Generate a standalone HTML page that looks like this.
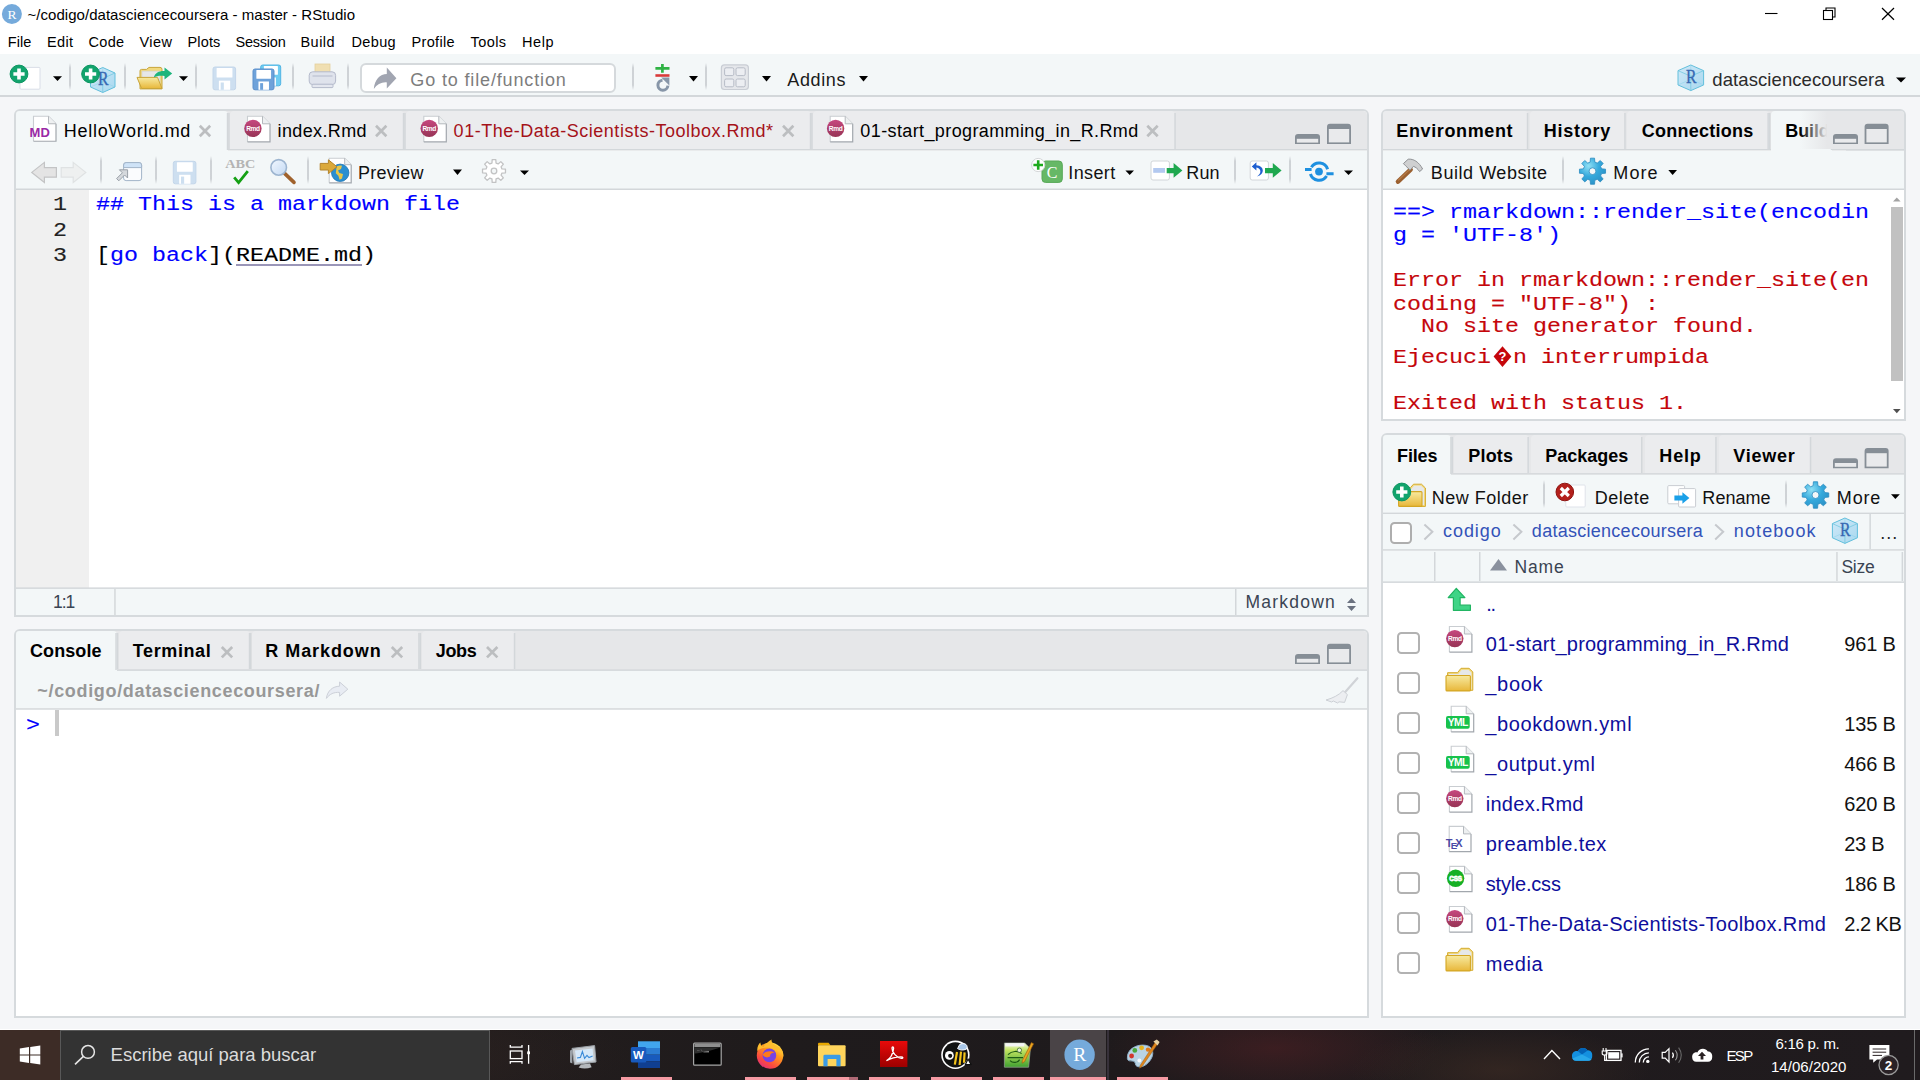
<!DOCTYPE html>
<html><head><meta charset="utf-8"><title>RStudio</title>
<style>
html,body{margin:0;padding:0}
body{width:1920px;height:1080px;overflow:hidden;position:relative;background:#f5f6f8;font-family:'Liberation Sans', sans-serif;}
div,svg,.t{position:absolute;box-sizing:border-box}
.t{white-space:pre;display:block}
</style></head><body>
<div style="left:0px;top:0px;width:1920px;height:54px;background:#fff;"></div>
<div style="left:0px;top:54px;width:1920px;height:41px;background:#f3f7f8;"></div>
<div style="left:0px;top:95px;width:1920px;height:2px;background:#d3d7da;"></div>
<span class="t" style="left:27.48px;top:6.75px;font-size:15px;line-height:15px;color:#000;letter-spacing:0.042px;">~/codigo/datasciencecoursera - master - RStudio</span>
<span class="t" style="left:7.74px;top:35.17px;font-size:14.5px;line-height:14.5px;color:#000;letter-spacing:0.035px;">File</span>
<span class="t" style="left:46.99px;top:35.17px;font-size:14.5px;line-height:14.5px;color:#000;letter-spacing:0.379px;">Edit</span>
<span class="t" style="left:88.49px;top:35.17px;font-size:14.5px;line-height:14.5px;color:#000;letter-spacing:0.336px;">Code</span>
<span class="t" style="left:139.49px;top:35.17px;font-size:14.5px;line-height:14.5px;color:#000;letter-spacing:0.461px;">View</span>
<span class="t" style="left:187.49px;top:35.17px;font-size:14.5px;line-height:14.5px;color:#000;letter-spacing:0.153px;">Plots</span>
<span class="t" style="left:235.49px;top:35.17px;font-size:14.5px;line-height:14.5px;color:#000;letter-spacing:-0.226px;">Session</span>
<span class="t" style="left:300.49px;top:35.17px;font-size:14.5px;line-height:14.5px;color:#000;letter-spacing:0.453px;">Build</span>
<span class="t" style="left:351.49px;top:35.17px;font-size:14.5px;line-height:14.5px;color:#000;letter-spacing:0.356px;">Debug</span>
<span class="t" style="left:411.49px;top:35.17px;font-size:14.5px;line-height:14.5px;color:#000;letter-spacing:0.344px;">Profile</span>
<span class="t" style="left:470.49px;top:35.17px;font-size:14.5px;line-height:14.5px;color:#000;letter-spacing:0.431px;">Tools</span>
<span class="t" style="left:521.99px;top:35.17px;font-size:14.5px;line-height:14.5px;color:#000;letter-spacing:0.609px;">Help</span>
<div style="left:360.4px;top:62.6px;width:256px;height:30.8px;background:#fff;border:2px solid #d5d9dc;border-radius:6px;"></div>
<span class="t" style="left:410.37px;top:70.70px;font-size:18px;line-height:18px;color:#7d7d7d;letter-spacing:0.851px;">Go to file/function</span>
<span class="t" style="left:787.37px;top:70.70px;font-size:18px;line-height:18px;color:#1a1a1a;letter-spacing:0.619px;">Addins</span>
<span class="t" style="left:1712.35px;top:71.28px;font-size:18.5px;line-height:18.5px;color:#2b2b2b;letter-spacing:0.083px;">datasciencecoursera</span>
<div style="left:69px;top:63px;width:2px;height:27px;background:linear-gradient(180deg,rgba(200,204,208,0),rgba(200,204,208,.85) 18%,rgba(200,204,208,.85) 82%,rgba(200,204,208,0));"></div>
<div style="left:124px;top:63px;width:2px;height:27px;background:linear-gradient(180deg,rgba(200,204,208,0),rgba(200,204,208,.85) 18%,rgba(200,204,208,.85) 82%,rgba(200,204,208,0));"></div>
<div style="left:195px;top:63px;width:2px;height:27px;background:linear-gradient(180deg,rgba(200,204,208,0),rgba(200,204,208,.85) 18%,rgba(200,204,208,.85) 82%,rgba(200,204,208,0));"></div>
<div style="left:292px;top:63px;width:2px;height:27px;background:linear-gradient(180deg,rgba(200,204,208,0),rgba(200,204,208,.85) 18%,rgba(200,204,208,.85) 82%,rgba(200,204,208,0));"></div>
<div style="left:347px;top:63px;width:2px;height:27px;background:linear-gradient(180deg,rgba(200,204,208,0),rgba(200,204,208,.85) 18%,rgba(200,204,208,.85) 82%,rgba(200,204,208,0));"></div>
<div style="left:632px;top:63px;width:2px;height:27px;background:linear-gradient(180deg,rgba(200,204,208,0),rgba(200,204,208,.85) 18%,rgba(200,204,208,.85) 82%,rgba(200,204,208,0));"></div>
<div style="left:705px;top:63px;width:2px;height:27px;background:linear-gradient(180deg,rgba(200,204,208,0),rgba(200,204,208,.85) 18%,rgba(200,204,208,.85) 82%,rgba(200,204,208,0));"></div>
<div style="left:14px;top:109px;width:1355px;height:508px;background:#fff;border:2px solid #d6dadd;border-radius:6px 6px 0 0;"></div>
<div style="left:16px;top:111px;width:1351px;height:38.5px;background:#e6e7e9;border-radius:4px 4px 0 0;"></div>
<div style="left:16px;top:149px;width:1351px;height:1px;background:rgba(211,215,218,1.00);"></div>
<div style="left:16px;top:150px;width:1351px;height:1px;background:rgba(211,215,218,0.50);"></div>
<div style="left:16px;top:111px;width:212px;height:40px;background:#f3f7f8;border-radius:4px 4px 0 0;"></div>
<div style="left:226px;top:113px;width:1px;height:37px;background:rgba(211,215,218,0.20);"></div>
<div style="left:227px;top:113px;width:1px;height:37px;background:rgba(211,215,218,1.00);"></div>
<div style="left:228px;top:113px;width:1px;height:37px;background:rgba(211,215,218,0.30);"></div>
<div style="left:229.8px;top:111px;width:174.2px;height:38px;background:#ebecee;border-radius:4px 4px 0 0;"></div>
<div style="left:402px;top:113px;width:1px;height:36px;background:rgba(211,215,218,0.20);"></div>
<div style="left:403px;top:113px;width:1px;height:36px;background:rgba(211,215,218,1.00);"></div>
<div style="left:404px;top:113px;width:1px;height:36px;background:rgba(211,215,218,0.30);"></div>
<div style="left:405.6px;top:111px;width:405.4px;height:38px;background:#ebecee;border-radius:4px 4px 0 0;"></div>
<div style="left:809px;top:113px;width:1px;height:36px;background:rgba(211,215,218,0.20);"></div>
<div style="left:810px;top:113px;width:1px;height:36px;background:rgba(211,215,218,1.00);"></div>
<div style="left:811px;top:113px;width:1px;height:36px;background:rgba(211,215,218,0.30);"></div>
<div style="left:812.6px;top:111px;width:362.9px;height:38px;background:#ebecee;border-radius:4px 4px 0 0;"></div>
<div style="left:1174px;top:113px;width:1px;height:36px;background:rgba(211,215,218,0.70);"></div>
<div style="left:1175px;top:113px;width:1px;height:36px;background:rgba(211,215,218,0.80);"></div>
<div style="left:228px;top:113px;width:1px;height:36px;background:rgba(211,215,218,0.80);"></div>
<div style="left:229px;top:113px;width:1px;height:36px;background:rgba(211,215,218,0.70);"></div>
<div style="left:404px;top:113px;width:1px;height:36px;background:rgba(211,215,218,0.80);"></div>
<div style="left:405px;top:113px;width:1px;height:36px;background:rgba(211,215,218,0.70);"></div>
<div style="left:811px;top:113px;width:1px;height:36px;background:rgba(211,215,218,0.80);"></div>
<div style="left:812px;top:113px;width:1px;height:36px;background:rgba(211,215,218,0.70);"></div>
<span class="t" style="left:63.87px;top:121.70px;font-size:18px;line-height:18px;color:#000;letter-spacing:0.735px;">HelloWorld.md</span>
<span class="t" style="left:277.62px;top:121.70px;font-size:18px;line-height:18px;color:#000;letter-spacing:0.357px;">index.Rmd</span>
<span class="t" style="left:453.62px;top:121.70px;font-size:18px;line-height:18px;color:#a51219;letter-spacing:0.511px;">01-The-Data-Scientists-Toolbox.Rmd*</span>
<span class="t" style="left:860.37px;top:121.70px;font-size:18px;line-height:18px;color:#000;letter-spacing:0.385px;">01-start_programming_in_R.Rmd</span>
<div style="left:16px;top:150.6px;width:1351px;height:38px;background:#f3f7f8;"></div>
<div style="left:16px;top:188px;width:1351px;height:1px;background:rgba(211,215,218,0.50);"></div>
<div style="left:16px;top:189px;width:1351px;height:1px;background:rgba(211,215,218,1.00);"></div>
<div style="left:99.5px;top:156px;width:2px;height:28px;background:linear-gradient(180deg,rgba(200,204,208,0),rgba(200,204,208,.85) 18%,rgba(200,204,208,.85) 82%,rgba(200,204,208,0));"></div>
<div style="left:154.5px;top:156px;width:2px;height:28px;background:linear-gradient(180deg,rgba(200,204,208,0),rgba(200,204,208,.85) 18%,rgba(200,204,208,.85) 82%,rgba(200,204,208,0));"></div>
<div style="left:210px;top:156px;width:2px;height:28px;background:linear-gradient(180deg,rgba(200,204,208,0),rgba(200,204,208,.85) 18%,rgba(200,204,208,.85) 82%,rgba(200,204,208,0));"></div>
<div style="left:306.5px;top:156px;width:2px;height:28px;background:linear-gradient(180deg,rgba(200,204,208,0),rgba(200,204,208,.85) 18%,rgba(200,204,208,.85) 82%,rgba(200,204,208,0));"></div>
<div style="left:1234px;top:156px;width:2px;height:28px;background:linear-gradient(180deg,rgba(200,204,208,0),rgba(200,204,208,.85) 18%,rgba(200,204,208,.85) 82%,rgba(200,204,208,0));"></div>
<div style="left:1289px;top:156px;width:2px;height:28px;background:linear-gradient(180deg,rgba(200,204,208,0),rgba(200,204,208,.85) 18%,rgba(200,204,208,.85) 82%,rgba(200,204,208,0));"></div>
<span class="t" style="left:358.12px;top:163.70px;font-size:18px;line-height:18px;color:#111;letter-spacing:0.247px;">Preview</span>
<span class="t" style="left:1068.37px;top:163.70px;font-size:18px;line-height:18px;color:#111;letter-spacing:0.371px;">Insert</span>
<span class="t" style="left:1186.37px;top:163.70px;font-size:18px;line-height:18px;color:#111;letter-spacing:0.076px;">Run</span>
<div style="left:16px;top:190px;width:73.2px;height:397.6px;background:#f0f0f0;"></div>
<span class="t" style="left:52.90px;top:194.90px;font-size:20px;line-height:20px;color:#222;font-family:'Liberation Mono', monospace;-webkit-text-stroke:0.12px;transform:scaleX(1.1651);transform-origin:0 0;">1</span>
<span class="t" style="left:52.90px;top:220.70px;font-size:20px;line-height:20px;color:#222;font-family:'Liberation Mono', monospace;-webkit-text-stroke:0.12px;transform:scaleX(1.1651);transform-origin:0 0;">2</span>
<span class="t" style="left:52.90px;top:246.40px;font-size:20px;line-height:20px;color:#222;font-family:'Liberation Mono', monospace;-webkit-text-stroke:0.12px;transform:scaleX(1.1651);transform-origin:0 0;">3</span>
<span class="t" style="left:96.40px;top:194.90px;font-size:20px;line-height:20px;color:#0000ff;font-family:'Liberation Mono', monospace;-webkit-text-stroke:0.12px;transform:scaleX(1.1664);transform-origin:0 0;">## This is a markdown file</span>
<span class="t" style="left:96.40px;top:246.40px;font-size:20px;line-height:20px;color:#000;font-family:'Liberation Mono', monospace;-webkit-text-stroke:0.12px;transform:scaleX(1.1651);transform-origin:0 0;">[</span>
<span class="t" style="left:110.40px;top:246.40px;font-size:20px;line-height:20px;color:#0000ff;font-family:'Liberation Mono', monospace;-webkit-text-stroke:0.12px;transform:scaleX(1.1664);transform-origin:0 0;">go back</span>
<span class="t" style="left:208.40px;top:246.40px;font-size:20px;line-height:20px;color:#000;font-family:'Liberation Mono', monospace;-webkit-text-stroke:0.12px;transform:scaleX(1.1659);transform-origin:0 0;">](</span>
<span class="t" style="left:236.40px;top:246.40px;font-size:20px;line-height:20px;color:#000;font-family:'Liberation Mono', monospace;-webkit-text-stroke:0.12px;transform:scaleX(1.1663);transform-origin:0 0;text-decoration:underline;text-decoration-color:#9a96b8;text-decoration-thickness:1.5px;text-underline-offset:3px;">README.md</span>
<span class="t" style="left:362.40px;top:246.40px;font-size:20px;line-height:20px;color:#000;font-family:'Liberation Mono', monospace;-webkit-text-stroke:0.12px;transform:scaleX(1.1651);transform-origin:0 0;">)</span>
<div style="left:16px;top:587px;width:1351px;height:1px;background:rgba(211,215,218,0.60);"></div>
<div style="left:16px;top:588px;width:1351px;height:1px;background:rgba(211,215,218,0.90);"></div>
<div style="left:16px;top:589px;width:1351px;height:26.2px;background:#f3f7f8;"></div>
<div style="left:114px;top:589px;width:1px;height:26px;background:rgba(211,215,218,0.80);"></div>
<div style="left:115px;top:589px;width:1px;height:26px;background:rgba(211,215,218,0.70);"></div>
<div style="left:1235px;top:589px;width:1px;height:26px;background:rgba(211,215,218,1.00);"></div>
<div style="left:1236px;top:589px;width:1px;height:26px;background:rgba(211,215,218,0.50);"></div>
<span class="t" style="left:52.89px;top:593.62px;font-size:17.5px;line-height:17.5px;color:#3a4453;letter-spacing:-0.951px;">1:1</span>
<span class="t" style="left:1245.39px;top:593.62px;font-size:17.5px;line-height:17.5px;color:#3a4453;letter-spacing:1.236px;">Markdown</span>
<div style="left:14px;top:629px;width:1355px;height:389px;background:#fff;border:2px solid #d6dadd;border-radius:6px 6px 0 0;"></div>
<div style="left:16px;top:631px;width:1351px;height:38.5px;background:#e6e7e9;border-radius:4px 4px 0 0;"></div>
<div style="left:16px;top:669px;width:1351px;height:1px;background:rgba(211,215,218,0.60);"></div>
<div style="left:16px;top:670px;width:1351px;height:1px;background:rgba(211,215,218,0.90);"></div>
<div style="left:16px;top:631px;width:100.5px;height:40.39999999999998px;background:#f3f7f8;border-radius:4px 4px 0 0;"></div>
<div style="left:115px;top:633px;width:1px;height:37px;background:rgba(211,215,218,0.70);"></div>
<div style="left:116px;top:633px;width:1px;height:37px;background:rgba(211,215,218,0.80);"></div>
<div style="left:118.6px;top:631px;width:131.4px;height:38.39999999999998px;background:#ebecee;border-radius:4px 4px 0 0;"></div>
<div style="left:248px;top:633px;width:1px;height:36px;background:rgba(211,215,218,0.20);"></div>
<div style="left:249px;top:633px;width:1px;height:36px;background:rgba(211,215,218,1.00);"></div>
<div style="left:250px;top:633px;width:1px;height:36px;background:rgba(211,215,218,0.30);"></div>
<div style="left:251.5px;top:631px;width:167.89999999999998px;height:38.39999999999998px;background:#ebecee;border-radius:4px 4px 0 0;"></div>
<div style="left:418px;top:633px;width:1px;height:36px;background:rgba(211,215,218,0.80);"></div>
<div style="left:419px;top:633px;width:1px;height:36px;background:rgba(211,215,218,0.70);"></div>
<div style="left:421.6px;top:631px;width:93.39999999999998px;height:38.39999999999998px;background:#ebecee;border-radius:4px 4px 0 0;"></div>
<div style="left:513px;top:633px;width:1px;height:36px;background:rgba(211,215,218,0.20);"></div>
<div style="left:514px;top:633px;width:1px;height:36px;background:rgba(211,215,218,1.00);"></div>
<div style="left:515px;top:633px;width:1px;height:36px;background:rgba(211,215,218,0.30);"></div>
<div style="left:116px;top:633px;width:1px;height:36px;background:rgba(211,215,218,0.20);"></div>
<div style="left:117px;top:633px;width:1px;height:36px;background:rgba(211,215,218,1.00);"></div>
<div style="left:118px;top:633px;width:1px;height:36px;background:rgba(211,215,218,0.30);"></div>
<div style="left:250px;top:633px;width:1px;height:36px;background:rgba(211,215,218,1.00);"></div>
<div style="left:251px;top:633px;width:1px;height:36px;background:rgba(211,215,218,0.50);"></div>
<div style="left:419px;top:633px;width:1px;height:36px;background:rgba(211,215,218,0.40);"></div>
<div style="left:420px;top:633px;width:1px;height:36px;background:rgba(211,215,218,1.00);"></div>
<div style="left:421px;top:633px;width:1px;height:36px;background:rgba(211,215,218,0.10);"></div>
<span class="t" style="left:29.97px;top:642.20px;font-size:18px;line-height:18px;color:#000;letter-spacing:0.092px;font-weight:700;">Console</span>
<span class="t" style="left:132.87px;top:642.20px;font-size:18px;line-height:18px;color:#000;letter-spacing:0.584px;font-weight:700;">Terminal</span>
<span class="t" style="left:265.37px;top:642.20px;font-size:18px;line-height:18px;color:#000;letter-spacing:0.924px;font-weight:700;">R Markdown</span>
<span class="t" style="left:435.77px;top:642.20px;font-size:18px;line-height:18px;color:#000;letter-spacing:-0.339px;font-weight:700;">Jobs</span>
<div style="left:16px;top:671px;width:1351px;height:37.4px;background:#f3f7f8;"></div>
<div style="left:16px;top:708px;width:1351px;height:1px;background:rgba(211,215,218,0.80);"></div>
<div style="left:16px;top:709px;width:1351px;height:1px;background:rgba(211,215,218,0.70);"></div>
<span class="t" style="left:37.37px;top:682.40px;font-size:18px;line-height:18px;color:#979797;letter-spacing:0.660px;font-weight:700;">~/codigo/datasciencecoursera/</span>
<span class="t" style="left:25.50px;top:715.90px;font-size:20px;line-height:20px;color:#0000ff;font-family:'Liberation Mono', monospace;-webkit-text-stroke:0.12px;transform:scaleX(1.1651);transform-origin:0 0;">&gt;</span>
<div style="left:55px;top:709.6px;width:4px;height:26.4px;background:#c9c9c9;"></div>
<div style="left:1381px;top:109px;width:525px;height:312px;background:#fff;border:2px solid #d6dadd;border-radius:6px 6px 0 0;"></div>
<div style="left:1383px;top:111px;width:1521.4px;height:38.5px;background:#e6e7e9;border-radius:4px 4px 0 0;width:521.4px;"></div>
<div style="left:1383px;top:149px;width:521px;height:1px;background:rgba(211,215,218,1.00);"></div>
<div style="left:1383px;top:150px;width:521px;height:1px;background:rgba(211,215,218,0.50);"></div>
<div style="left:1383px;top:111px;width:145px;height:38px;background:#ebecee;border-radius:4px 4px 0 0;"></div>
<div style="left:1526px;top:113px;width:1px;height:36px;background:rgba(211,215,218,0.20);"></div>
<div style="left:1527px;top:113px;width:1px;height:36px;background:rgba(211,215,218,1.00);"></div>
<div style="left:1528px;top:113px;width:1px;height:36px;background:rgba(211,215,218,0.30);"></div>
<div style="left:1530px;top:111px;width:95.40000000000009px;height:38px;background:#ebecee;border-radius:4px 4px 0 0;"></div>
<div style="left:1624px;top:113px;width:1px;height:36px;background:rgba(211,215,218,0.80);"></div>
<div style="left:1625px;top:113px;width:1px;height:36px;background:rgba(211,215,218,0.70);"></div>
<div style="left:1627.4px;top:111px;width:141.19999999999982px;height:38px;background:#ebecee;border-radius:4px 4px 0 0;"></div>
<div style="left:1767px;top:113px;width:1px;height:36px;background:rgba(211,215,218,0.60);"></div>
<div style="left:1768px;top:113px;width:1px;height:36px;background:rgba(211,215,218,0.90);"></div>
<div style="left:1771px;top:111px;width:61px;height:40px;background:#f3f7f8;border-radius:4px 4px 0 0;"></div>
<div style="left:1830px;top:113px;width:1px;height:37px;background:rgba(211,215,218,0.20);"></div>
<div style="left:1831px;top:113px;width:1px;height:37px;background:rgba(211,215,218,1.00);"></div>
<div style="left:1832px;top:113px;width:1px;height:37px;background:rgba(211,215,218,0.30);"></div>
<div style="left:1769px;top:113px;width:1px;height:36px;background:rgba(211,215,218,1.00);"></div>
<div style="left:1770px;top:113px;width:1px;height:36px;background:rgba(211,215,218,0.50);"></div>
<span class="t" style="left:1396.37px;top:122.20px;font-size:18px;line-height:18px;color:#000;letter-spacing:0.613px;font-weight:700;">Environment</span>
<span class="t" style="left:1543.87px;top:122.20px;font-size:18px;line-height:18px;color:#000;letter-spacing:0.749px;font-weight:700;">History</span>
<span class="t" style="left:1641.87px;top:122.20px;font-size:18px;line-height:18px;color:#000;letter-spacing:0.249px;font-weight:700;">Connections</span>
<span class="t" style="left:1785.37px;top:122.20px;font-size:18px;line-height:18px;color:#000;letter-spacing:-0.148px;font-weight:700;">Build</span>
<div style="left:1800px;top:111px;width:32px;height:38.4px;background:linear-gradient(90deg,rgba(230,231,233,0) 0,rgba(230,231,233,1) 85%);"></div>
<div style="left:1830px;top:111px;width:74.4px;height:38.4px;background:#e6e7e9;border-radius:0 4px 0 0;"></div>
<div style="left:1846px;top:149px;width:58px;height:1px;background:rgba(211,215,218,1.00);"></div>
<div style="left:1846px;top:150px;width:58px;height:1px;background:rgba(211,215,218,0.50);"></div>
<div style="left:1383px;top:150.6px;width:521.4px;height:38px;background:#f3f7f8;"></div>
<div style="left:1383px;top:188px;width:521px;height:1px;background:rgba(211,215,218,0.50);"></div>
<div style="left:1383px;top:189px;width:521px;height:1px;background:rgba(211,215,218,1.00);"></div>
<div style="left:1561.5px;top:156px;width:2px;height:28px;background:linear-gradient(180deg,rgba(200,204,208,0),rgba(200,204,208,.85) 18%,rgba(200,204,208,.85) 82%,rgba(200,204,208,0));"></div>
<span class="t" style="left:1430.87px;top:163.70px;font-size:18px;line-height:18px;color:#111;letter-spacing:0.540px;">Build Website</span>
<span class="t" style="left:1613.37px;top:163.70px;font-size:18px;line-height:18px;color:#111;letter-spacing:1.061px;">More</span>
<span class="t" style="left:1393.40px;top:202.50px;font-size:20px;line-height:20px;color:#0000ff;font-family:'Liberation Mono', monospace;-webkit-text-stroke:0.12px;transform:scaleX(1.1664);transform-origin:0 0;">==&gt; rmarkdown::render_site(encodin</span>
<span class="t" style="left:1393.40px;top:225.50px;font-size:20px;line-height:20px;color:#0000ff;font-family:'Liberation Mono', monospace;-webkit-text-stroke:0.12px;transform:scaleX(1.1664);transform-origin:0 0;">g = 'UTF-8')</span>
<span class="t" style="left:1393.40px;top:271.30px;font-size:20px;line-height:20px;color:#c5060b;font-family:'Liberation Mono', monospace;-webkit-text-stroke:0.12px;transform:scaleX(1.1664);transform-origin:0 0;">Error in rmarkdown::render_site(en</span>
<span class="t" style="left:1393.40px;top:294.50px;font-size:20px;line-height:20px;color:#c5060b;font-family:'Liberation Mono', monospace;-webkit-text-stroke:0.12px;transform:scaleX(1.1664);transform-origin:0 0;">coding = "UTF-8") :</span>
<span class="t" style="left:1393.40px;top:317.30px;font-size:20px;line-height:20px;color:#c5060b;font-family:'Liberation Mono', monospace;-webkit-text-stroke:0.12px;transform:scaleX(1.1664);transform-origin:0 0;">  No site generator found.</span>
<span class="t" style="left:1393.40px;top:347.50px;font-size:20px;line-height:20px;color:#c5060b;font-family:'Liberation Mono', monospace;-webkit-text-stroke:0.12px;transform:scaleX(1.1664);transform-origin:0 0;">Ejecuci</span>
<span class="t" style="left:1393.40px;top:393.90px;font-size:20px;line-height:20px;color:#c5060b;font-family:'Liberation Mono', monospace;-webkit-text-stroke:0.12px;transform:scaleX(1.1664);transform-origin:0 0;">Exited with status 1.</span>
<span class="t" style="left:1513.20px;top:347.50px;font-size:20px;line-height:20px;color:#c5060b;font-family:'Liberation Mono', monospace;-webkit-text-stroke:0.12px;transform:scaleX(1.1664);transform-origin:0 0;">n interrumpida</span>
<div style="left:1889px;top:190px;width:15.4px;height:229px;background:#fff;"></div>
<div style="left:1890.6px;top:207px;width:12.6px;height:173.6px;background:#c1c1c1;"></div>
<div style="left:1381px;top:433px;width:525px;height:585px;background:#fff;border:2px solid #d6dadd;border-radius:6px 6px 0 0;"></div>
<div style="left:1383px;top:435.2px;width:521.4px;height:38.5px;background:#e6e7e9;border-radius:4px 4px 0 0;"></div>
<div style="left:1383px;top:473px;width:521px;height:1px;background:rgba(211,215,218,0.80);"></div>
<div style="left:1383px;top:474px;width:521px;height:1px;background:rgba(211,215,218,0.70);"></div>
<div style="left:1383px;top:435.2px;width:68.40000000000009px;height:40.0px;background:#f3f7f8;border-radius:4px 4px 0 0;"></div>
<div style="left:1450px;top:437px;width:1px;height:37px;background:rgba(211,215,218,0.80);"></div>
<div style="left:1451px;top:437px;width:1px;height:37px;background:rgba(211,215,218,0.70);"></div>
<div style="left:1453.6px;top:435.2px;width:75.0px;height:38.0px;background:#ebecee;border-radius:4px 4px 0 0;"></div>
<div style="left:1527px;top:437px;width:1px;height:36px;background:rgba(211,215,218,0.60);"></div>
<div style="left:1528px;top:437px;width:1px;height:36px;background:rgba(211,215,218,0.90);"></div>
<div style="left:1531px;top:435.2px;width:111.20000000000005px;height:38.0px;background:#ebecee;border-radius:4px 4px 0 0;"></div>
<div style="left:1641px;top:437px;width:1px;height:36px;background:rgba(211,215,218,1.00);"></div>
<div style="left:1642px;top:437px;width:1px;height:36px;background:rgba(211,215,218,0.50);"></div>
<div style="left:1645px;top:435.2px;width:71.40000000000009px;height:38.0px;background:#ebecee;border-radius:4px 4px 0 0;"></div>
<div style="left:1715px;top:437px;width:1px;height:36px;background:rgba(211,215,218,0.80);"></div>
<div style="left:1716px;top:437px;width:1px;height:36px;background:rgba(211,215,218,0.70);"></div>
<div style="left:1719px;top:435.2px;width:92px;height:38.0px;background:#ebecee;border-radius:4px 4px 0 0;"></div>
<div style="left:1809px;top:437px;width:1px;height:36px;background:rgba(211,215,218,0.20);"></div>
<div style="left:1810px;top:437px;width:1px;height:36px;background:rgba(211,215,218,1.00);"></div>
<div style="left:1811px;top:437px;width:1px;height:36px;background:rgba(211,215,218,0.30);"></div>
<div style="left:1451px;top:437px;width:1px;height:36px;background:rgba(211,215,218,0.40);"></div>
<div style="left:1452px;top:437px;width:1px;height:36px;background:rgba(211,215,218,1.00);"></div>
<div style="left:1453px;top:437px;width:1px;height:36px;background:rgba(211,215,218,0.10);"></div>
<span class="t" style="left:1397.12px;top:446.60px;font-size:18px;line-height:18px;color:#000;letter-spacing:-0.184px;font-weight:700;">Files</span>
<span class="t" style="left:1468.37px;top:446.60px;font-size:18px;line-height:18px;color:#000;letter-spacing:0.149px;font-weight:700;">Plots</span>
<span class="t" style="left:1545.37px;top:446.60px;font-size:18px;line-height:18px;color:#000;letter-spacing:-0.040px;font-weight:700;">Packages</span>
<span class="t" style="left:1659.37px;top:446.60px;font-size:18px;line-height:18px;color:#000;letter-spacing:0.811px;font-weight:700;">Help</span>
<span class="t" style="left:1733.37px;top:446.60px;font-size:18px;line-height:18px;color:#000;letter-spacing:0.757px;font-weight:700;">Viewer</span>
<div style="left:1383px;top:474.8px;width:521.4px;height:38px;background:#f3f7f8;"></div>
<div style="left:1383px;top:512px;width:521px;height:1px;background:rgba(211,215,218,0.40);"></div>
<div style="left:1383px;top:513px;width:521px;height:1px;background:rgba(211,215,218,1.00);"></div>
<div style="left:1383px;top:514px;width:521px;height:1px;background:rgba(211,215,218,0.10);"></div>
<div style="left:1542.5px;top:480px;width:2px;height:28px;background:linear-gradient(180deg,rgba(200,204,208,0),rgba(200,204,208,.85) 18%,rgba(200,204,208,.85) 82%,rgba(200,204,208,0));"></div>
<div style="left:1785px;top:480px;width:2px;height:28px;background:linear-gradient(180deg,rgba(200,204,208,0),rgba(200,204,208,.85) 18%,rgba(200,204,208,.85) 82%,rgba(200,204,208,0));"></div>
<span class="t" style="left:1431.87px;top:488.70px;font-size:18px;line-height:18px;color:#111;letter-spacing:0.473px;">New Folder</span>
<span class="t" style="left:1594.87px;top:488.70px;font-size:18px;line-height:18px;color:#111;letter-spacing:0.455px;">Delete</span>
<span class="t" style="left:1702.37px;top:488.70px;font-size:18px;line-height:18px;color:#111;letter-spacing:0.036px;">Rename</span>
<span class="t" style="left:1836.87px;top:488.70px;font-size:18px;line-height:18px;color:#111;letter-spacing:0.811px;">More</span>
<div style="left:1383px;top:514.2px;width:521.4px;height:35.4px;background:#f3f7f8;"></div>
<div style="left:1383px;top:549px;width:521px;height:1px;background:rgba(211,215,218,0.80);"></div>
<div style="left:1383px;top:550px;width:521px;height:1px;background:rgba(211,215,218,0.70);"></div>
<div style="left:1869px;top:514px;width:1px;height:35px;background:rgba(211,215,218,0.60);"></div>
<div style="left:1870px;top:514px;width:1px;height:35px;background:rgba(211,215,218,0.90);"></div>
<div style="left:1390px;top:522.4px;width:22.4px;height:22px;background:#fff;border:2px solid #aeaeae;border-radius:4.5px;"></div>
<span class="t" style="left:1443.12px;top:522.20px;font-size:18px;line-height:18px;color:#3353b8;letter-spacing:0.911px;">codigo</span>
<span class="t" style="left:1531.87px;top:522.20px;font-size:18px;line-height:18px;color:#3353b8;letter-spacing:0.271px;">datasciencecoursera</span>
<span class="t" style="left:1733.87px;top:522.20px;font-size:18px;line-height:18px;color:#3353b8;letter-spacing:1.085px;">notebook</span>
<span class="t" style="left:1880.37px;top:524.30px;font-size:18px;line-height:18px;color:#222;letter-spacing:0.915px;">...</span>
<div style="left:1383px;top:550.8px;width:521.4px;height:30.8px;background:#f3f7f8;"></div>
<div style="left:1383px;top:581px;width:521px;height:1px;background:rgba(211,215,218,0.60);"></div>
<div style="left:1383px;top:582px;width:521px;height:1px;background:rgba(211,215,218,0.90);"></div>
<div style="left:1434px;top:552px;width:1px;height:29px;background:rgba(211,215,218,1.00);"></div>
<div style="left:1435px;top:552px;width:1px;height:29px;background:rgba(211,215,218,0.50);"></div>
<div style="left:1479px;top:552px;width:1px;height:29px;background:rgba(211,215,218,1.00);"></div>
<div style="left:1480px;top:552px;width:1px;height:29px;background:rgba(211,215,218,0.50);"></div>
<div style="left:1836px;top:552px;width:1px;height:29px;background:rgba(211,215,218,0.80);"></div>
<div style="left:1837px;top:552px;width:1px;height:29px;background:rgba(211,215,218,0.70);"></div>
<div style="left:1901px;top:552px;width:1px;height:29px;background:rgba(211,215,218,0.40);"></div>
<div style="left:1902px;top:552px;width:1px;height:29px;background:rgba(211,215,218,1.00);"></div>
<div style="left:1903px;top:552px;width:1px;height:29px;background:rgba(211,215,218,0.10);"></div>
<span class="t" style="left:1514.39px;top:558.62px;font-size:17.5px;line-height:17.5px;color:#3a4453;letter-spacing:0.884px;">Name</span>
<span class="t" style="left:1841.39px;top:558.62px;font-size:17.5px;line-height:17.5px;color:#3a4453;letter-spacing:-0.205px;">Size</span>
<span class="t" style="left:1486.30px;top:593.60px;font-size:20px;line-height:20px;color:#0e0e9c;letter-spacing:-1.362px;">..</span>
<span class="t" style="left:1485.80px;top:633.60px;font-size:20px;line-height:20px;color:#0e0e9c;letter-spacing:0.228px;">01-start_programming_in_R.Rmd</span>
<span class="t" style="left:1844.30px;top:633.60px;font-size:20px;line-height:20px;color:#111;letter-spacing:-0.173px;">961 B</span>
<div style="left:1397.2px;top:632.4px;width:22.4px;height:22px;background:#fff;border:2px solid #b2b2b2;border-radius:4.5px;"></div>
<span class="t" style="left:1485.30px;top:673.60px;font-size:20px;line-height:20px;color:#0e0e9c;letter-spacing:0.680px;">_book</span>
<div style="left:1397.2px;top:672.4px;width:22.4px;height:22px;background:#fff;border:2px solid #b2b2b2;border-radius:4.5px;"></div>
<span class="t" style="left:1485.30px;top:713.60px;font-size:20px;line-height:20px;color:#0e0e9c;letter-spacing:0.610px;">_bookdown.yml</span>
<span class="t" style="left:1844.30px;top:713.60px;font-size:20px;line-height:20px;color:#111;letter-spacing:-0.173px;">135 B</span>
<div style="left:1397.2px;top:712.4px;width:22.4px;height:22px;background:#fff;border:2px solid #b2b2b2;border-radius:4.5px;"></div>
<span class="t" style="left:1485.30px;top:753.60px;font-size:20px;line-height:20px;color:#0e0e9c;letter-spacing:0.637px;">_output.yml</span>
<span class="t" style="left:1844.30px;top:753.60px;font-size:20px;line-height:20px;color:#111;letter-spacing:-0.173px;">466 B</span>
<div style="left:1397.2px;top:752.4px;width:22.4px;height:22px;background:#fff;border:2px solid #b2b2b2;border-radius:4.5px;"></div>
<span class="t" style="left:1485.80px;top:793.60px;font-size:20px;line-height:20px;color:#0e0e9c;letter-spacing:0.255px;">index.Rmd</span>
<span class="t" style="left:1844.30px;top:793.60px;font-size:20px;line-height:20px;color:#111;letter-spacing:-0.173px;">620 B</span>
<div style="left:1397.2px;top:792.4px;width:22.4px;height:22px;background:#fff;border:2px solid #b2b2b2;border-radius:4.5px;"></div>
<span class="t" style="left:1485.80px;top:833.60px;font-size:20px;line-height:20px;color:#0e0e9c;letter-spacing:0.440px;">preamble.tex</span>
<span class="t" style="left:1844.30px;top:833.60px;font-size:20px;line-height:20px;color:#111;letter-spacing:-0.314px;">23 B</span>
<div style="left:1397.2px;top:832.4px;width:22.4px;height:22px;background:#fff;border:2px solid #b2b2b2;border-radius:4.5px;"></div>
<span class="t" style="left:1485.80px;top:873.60px;font-size:20px;line-height:20px;color:#0e0e9c;letter-spacing:-0.199px;">style.css</span>
<span class="t" style="left:1844.30px;top:873.60px;font-size:20px;line-height:20px;color:#111;letter-spacing:-0.173px;">186 B</span>
<div style="left:1397.2px;top:872.4px;width:22.4px;height:22px;background:#fff;border:2px solid #b2b2b2;border-radius:4.5px;"></div>
<span class="t" style="left:1485.80px;top:913.60px;font-size:20px;line-height:20px;color:#0e0e9c;letter-spacing:0.367px;">01-The-Data-Scientists-Toolbox.Rmd</span>
<span class="t" style="left:1844.30px;top:913.60px;font-size:20px;line-height:20px;color:#111;letter-spacing:-0.524px;">2.2 KB</span>
<div style="left:1397.2px;top:912.4px;width:22.4px;height:22px;background:#fff;border:2px solid #b2b2b2;border-radius:4.5px;"></div>
<span class="t" style="left:1485.80px;top:953.60px;font-size:20px;line-height:20px;color:#0e0e9c;letter-spacing:0.583px;">media</span>
<div style="left:1397.2px;top:952.4px;width:22.4px;height:22px;background:#fff;border:2px solid #b2b2b2;border-radius:4.5px;"></div>
<div style="left:0px;top:1029px;width:1920px;height:1px;background:#fff;"></div>
<div style="left:0px;top:1030px;width:1920px;height:50px;background:#201b1d;background:radial-gradient(ellipse 150px 45px at 1500px 40px,rgba(66,46,36,.55),rgba(66,46,36,0) 100%),radial-gradient(ellipse 170px 50px at 1275px 18px,rgba(78,32,36,.6),rgba(78,32,36,0) 100%),radial-gradient(ellipse 300px 60px at 330px 25px,rgba(60,44,38,.35),rgba(60,44,38,0) 100%),linear-gradient(90deg,#3c2b25 0,#2b2220 5%,#231d1d 22%,#1f1b1c 40%,#1e1a1c 60%,#201b1e 100%);"></div>
<div style="left:0px;top:1030px;width:60px;height:50px;background:#3d2c26;"></div>
<div style="left:60.4px;top:1030.4px;width:429.6px;height:49.6px;background:#333333;border:1px solid #585858;border-bottom:0;"></div>
<span class="t" style="left:110.60px;top:1046.18px;font-size:18.5px;line-height:18.5px;color:#dcdcdc;letter-spacing:-0.001px;">Escribe aquí para buscar</span>
<div style="left:1050px;top:1030px;width:56.4px;height:50px;background:#4a4447;"></div>
<div style="left:1107.4px;top:1030px;width:1.4px;height:50px;background:#37313a;"></div>
<div style="left:621px;top:1077.2px;width:51px;height:2.8px;background:#f59aa3;"></div>
<div style="left:745px;top:1077.2px;width:51px;height:2.8px;background:#f59aa3;"></div>
<div style="left:807px;top:1077.2px;width:51px;height:2.8px;background:#f59aa3;"></div>
<div style="left:869px;top:1077.2px;width:51px;height:2.8px;background:#f59aa3;"></div>
<div style="left:930.6px;top:1077.2px;width:51.39999999999998px;height:2.8px;background:#f59aa3;"></div>
<div style="left:993px;top:1077.2px;width:51px;height:2.8px;background:#f59aa3;"></div>
<div style="left:1050px;top:1077.2px;width:56.40000000000009px;height:2.8px;background:#f59aa3;"></div>
<div style="left:1117px;top:1077.2px;width:51px;height:2.8px;background:#f59aa3;"></div>
<div style="left:848.5px;top:1077.2px;width:9.5px;height:2.8px;background:#b06a76;"></div>
<span class="t" style="left:1726.47px;top:1048.25px;font-size:15px;line-height:15px;color:#fff;letter-spacing:-1.655px;">ESP</span>
<span class="t" style="left:1775.47px;top:1036.25px;font-size:15px;line-height:15px;color:#fff;letter-spacing:-0.265px;">6:16 p. m.</span>
<span class="t" style="left:1770.97px;top:1059.25px;font-size:15px;line-height:15px;color:#fff;letter-spacing:0.047px;">14/06/2020</span>
<div style="left:1914.4px;top:1030px;width:1px;height:50px;background:#6a6a6a;"></div>
<svg style="left:0;top:0" width="1920" height="1080" viewBox="0 0 1920 1080"><defs>
<linearGradient id="gFold" x1="0" y1="0" x2="0" y2="1"><stop offset="0" stop-color="#f7eaa0"/><stop offset="1" stop-color="#e8b73a"/></linearGradient>
<linearGradient id="gRmd" x1="0" y1="0" x2="0" y2="1"><stop offset="0" stop-color="#c6487f"/><stop offset="1" stop-color="#973455"/></linearGradient>
<radialGradient id="gGear" cx="0.35" cy="0.3" r="0.8"><stop offset="0" stop-color="#8fe0f5"/><stop offset="0.5" stop-color="#35a9dc"/><stop offset="1" stop-color="#2a8fc4"/></radialGradient>
<linearGradient id="gCube" x1="0" y1="0" x2="1" y2="1"><stop offset="0" stop-color="#cfe9f8"/><stop offset="1" stop-color="#a9d8ef"/></linearGradient>
<linearGradient id="gPdf" x1="0" y1="0" x2="0" y2="1"><stop offset="0" stop-color="#e80a0a"/><stop offset="1" stop-color="#9c0000"/></linearGradient>
<linearGradient id="gNpp" x1="0" y1="0" x2="0" y2="1"><stop offset="0" stop-color="#f4f8e8"/><stop offset="0.3" stop-color="#c2e460"/><stop offset="1" stop-color="#3fa030"/></linearGradient>
<linearGradient id="gFx" x1="0.8" y1="0.05" x2="0.2" y2="0.95"><stop offset="0" stop-color="#ffe94a"/><stop offset="0.35" stop-color="#ff9a1e"/><stop offset="0.75" stop-color="#fb4a3e"/><stop offset="1" stop-color="#e0307a"/></linearGradient>
<linearGradient id="gLens" x1="0" y1="0" x2="1" y2="1"><stop offset="0" stop-color="#f2f8ff"/><stop offset="1" stop-color="#c3d9f3"/></linearGradient>
</defs><circle cx="11.90" cy="14.00" r="10.00" fill="#75aadb" /><text x="11.90" y="18.60" font-family="Liberation Serif" font-size="13.5" font-weight="400" fill="#fff" text-anchor="middle" >R</text><path d="M1765 13.5H1777.5" fill="none" stroke="#000" stroke-width="1.1" /><rect x="1823.50" y="10.50" width="9.00" height="9.00" fill="none" stroke="#000" stroke-width="1.1" /><path d="M1826 10.5V8H1835V17H1832.5" fill="none" stroke="#000" stroke-width="1.1" /><path d="M1882 8L1894 19.8M1894 8L1882 19.8" fill="none" stroke="#000" stroke-width="1.2" /><rect x="20.00" y="67.40" width="20.00" height="21.80" fill="#fff" stroke="#d9dee7" stroke-width="1" rx="1" /><circle cx="19.00" cy="74.00" r="8.90" fill="#12a46d" stroke="#0e9562" stroke-width="1" /><path d="M13.4 74H24.6M19 68.4V79.6" fill="none" stroke="#fff" stroke-width="3.6" /><path d="M53 76.3H62L57.5 81Z" fill="#000" /><path d="M102.75 67.5L115.0 73.0V87.0L102.75 92.5L90.5 87.0V73.0Z" fill="url(#gCube)" stroke="#62bfdc" stroke-width="1" /><path d="M90.5 73.0L102.75 78.5L115.0 73.0M102.75 78.5V92.5" fill="none" stroke="#6cc6de" stroke-width="0.9" opacity="0.8"/><path d="M90.5 87.0L102.75 81.5L115.0 87.0M102.75 67.5V81.5" fill="none" stroke="#7fcfe6" stroke-width="0.7" opacity="0.6"/><text x="103.15" y="84.75" font-family="Liberation Serif" font-size="18.0" font-weight="400" fill="#3768b2" text-anchor="middle" stroke="#3768b2" stroke-width="0.35" textLength="10.5" lengthAdjust="spacingAndGlyphs">R</text><circle cx="90.60" cy="74.00" r="8.90" fill="#12a46d" stroke="#0e9562" stroke-width="1" /><path d="M85.0 74H96.19999999999999M90.6 68.4V79.6" fill="none" stroke="#fff" stroke-width="3.6" /><path d="M140 88.9V70.9q0 -1.5 1.5 -1.5h5l2.5 -2h11q2 0 2 2V88.9Z" fill="#f1d97e" stroke="#c9a53a" stroke-width="1" /><rect x="142.00" y="71.10" width="18.00" height="13.00" fill="#e6e7e8" stroke="#cfcfcf" stroke-width="0.6" /><path d="M137 77.4H157.5L162 88.5H141.6Z" fill="url(#gFold)" stroke="#c9a53a" stroke-width="1" /><path d="M153.8 77.5C155 72.5 160 70.6 164.5 71V67.6L172.2 73.4L164.5 79.4V76C160.5 75.4 156.5 75.8 153.8 77.5Z" fill="#1db57c" /><path d="M179 76.3H188L183.5 81Z" fill="#000" /><rect x="213.00" y="67.00" width="22.60" height="22.80" fill="#cddff0" stroke="#c3d6ea" stroke-width="1" rx="2" opacity="1"/><rect x="216.62" y="68.00" width="15.82" height="9.58" fill="#fff" rx="0.5" opacity="1"/><rect x="218.88" y="80.68" width="11.30" height="9.12" fill="#fff" opacity="1"/><rect x="220.68" y="82.50" width="3.16" height="7.30" fill="#cddff0" opacity="1"/><rect x="260.70" y="65.00" width="20.00" height="20.80" fill="#6fccf1" stroke="#52b5e4" stroke-width="1" rx="2" opacity="1"/><rect x="263.90" y="66.00" width="14.00" height="8.74" fill="#fff" rx="0.5" opacity="1"/><rect x="265.90" y="77.48" width="10.00" height="8.32" fill="#fff" opacity="1"/><rect x="267.50" y="79.14" width="2.80" height="6.66" fill="#6fccf1" opacity="1"/><rect x="253.00" y="69.00" width="21.00" height="20.80" fill="#6ea2da" stroke="#5b8fcc" stroke-width="1" rx="2" opacity="1"/><rect x="256.36" y="70.00" width="14.70" height="8.74" fill="#fff" rx="0.5" opacity="1"/><rect x="258.46" y="81.48" width="10.50" height="8.32" fill="#fff" opacity="1"/><rect x="260.14" y="83.14" width="2.94" height="6.66" fill="#6ea2da" opacity="1"/><rect x="315.00" y="64.00" width="15.00" height="12.50" fill="#f0dfb2" stroke="#e3cf9c" stroke-width="0.8" /><rect x="309.20" y="71.80" width="26.40" height="12.80" fill="#dfe3ec" stroke="#b4bacb" stroke-width="1" rx="3.5" /><path d="M312.5 76H332.5" fill="none" stroke="#b4bacb" stroke-width="1" /><rect x="312.00" y="84.20" width="21.00" height="3.40" fill="#e4e7ef" stroke="#b4bacb" stroke-width="1" rx="1" /><path d="M373.8 89C374.5 79.5 380 74.2 386.8 74V67.6L396.4 78.2L386.8 88.6V82.4C381.5 82 377 84.2 373.8 89Z" fill="#a1a5b1" /><path d="M655.4 68.4H669.5M662.4 64V72.8" fill="none" stroke="#2fb344" stroke-width="2.7" /><path d="M655.4 75.5H669.5" fill="none" stroke="#d93a3a" stroke-width="2.6" /><path d="M662.5 80.2A5 5 0 1 0 667.9 85.6" fill="none" stroke="#8796a8" stroke-width="3" /><path d="M661.2 77.4H669.4V85.4Z" fill="#8796a8" /><path d="M689 76H698L693.5 81.4Z" fill="#000" /><rect x="721.40" y="64.90" width="27.00" height="24.60" fill="#e5e7eb" stroke="#c9cdd4" stroke-width="1.2" rx="3" /><rect x="724.60" y="67.80" width="9.20" height="7.80" fill="#eceef2" stroke="#b7bcc6" stroke-width="1" rx="1.5" /><rect x="724.60" y="79.00" width="9.20" height="7.80" fill="#eceef2" stroke="#b7bcc6" stroke-width="1" rx="1.5" /><rect x="736.00" y="67.80" width="9.20" height="7.80" fill="#eceef2" stroke="#b7bcc6" stroke-width="1" rx="1.5" /><rect x="736.00" y="79.00" width="9.20" height="7.80" fill="#eceef2" stroke="#b7bcc6" stroke-width="1" rx="1.5" /><path d="M762 76H771L766.5 81.4Z" fill="#000" /><path d="M859 76H868L863.5 81.4Z" fill="#000" /><path d="M1690.8 65L1703.6 70.632V84.96799999999999L1690.8 90.6L1678 84.96799999999999V70.632Z" fill="url(#gCube)" stroke="#62bfdc" stroke-width="1" /><path d="M1678 70.632L1690.8 76.264L1703.6 70.632M1690.8 76.264V90.6" fill="none" stroke="#6cc6de" stroke-width="0.9" opacity="0.8"/><path d="M1678 84.96799999999999L1690.8 79.336L1703.6 84.96799999999999M1690.8 65V79.336" fill="none" stroke="#7fcfe6" stroke-width="0.7" opacity="0.6"/><text x="1691.20" y="82.66" font-family="Liberation Serif" font-size="18.432" font-weight="400" fill="#3768b2" text-anchor="middle" stroke="#3768b2" stroke-width="0.35" textLength="10.5" lengthAdjust="spacingAndGlyphs">R</text><path d="M1896 77.5H1906L1901.0 82.5Z" fill="#000" /><path d="M33.5 116.25H48.5L56.0 123.75V141.25H33.5Z" fill="#fff" /><path d="M33.5 141.25V116.25H48.5L56.0 123.75" fill="none" stroke="#c9cdd1" stroke-width="1.1" /><path d="M56.0 123.75V141.25H33.5" fill="none" stroke="#a2a7ad" stroke-width="1.2" /><path d="M48.5 116.25V123.75H56.0" fill="#eef0f1" stroke="#b4b8bd" stroke-width="1" /><text x="29.60" y="137.05" font-family="Liberation Sans" font-size="12.4" font-weight="700" fill="#9a2aa6" text-anchor="start" textLength="20.2" lengthAdjust="spacingAndGlyphs">MD</text><path d="M247.5 116.3H262.5L270.0 123.8V141.9H247.5Z" fill="#fff" /><path d="M247.5 141.9V116.3H262.5L270.0 123.8" fill="none" stroke="#c9cdd1" stroke-width="1.1" /><path d="M270.0 123.8V141.9H247.5" fill="none" stroke="#a2a7ad" stroke-width="1.2" /><path d="M262.5 116.3V123.8H270.0" fill="#eef0f1" stroke="#b4b8bd" stroke-width="1" /><circle cx="252.90" cy="128.40" r="8.70" fill="url(#gRmd)" /><text x="252.90" y="130.70" font-family="Liberation Sans" font-size="6.6" font-weight="700" fill="#fff" text-anchor="middle" letter-spacing="-0.4">Rmd</text><path d="M423.8 116.3H438.8L446.3 123.8V141.9H423.8Z" fill="#fff" /><path d="M423.8 141.9V116.3H438.8L446.3 123.8" fill="none" stroke="#c9cdd1" stroke-width="1.1" /><path d="M446.3 123.8V141.9H423.8" fill="none" stroke="#a2a7ad" stroke-width="1.2" /><path d="M438.8 116.3V123.8H446.3" fill="#eef0f1" stroke="#b4b8bd" stroke-width="1" /><circle cx="429.20" cy="128.40" r="8.70" fill="url(#gRmd)" /><text x="429.20" y="130.70" font-family="Liberation Sans" font-size="6.6" font-weight="700" fill="#fff" text-anchor="middle" letter-spacing="-0.4">Rmd</text><path d="M830.2 116.3H845.2L852.7 123.8V141.9H830.2Z" fill="#fff" /><path d="M830.2 141.9V116.3H845.2L852.7 123.8" fill="none" stroke="#c9cdd1" stroke-width="1.1" /><path d="M852.7 123.8V141.9H830.2" fill="none" stroke="#a2a7ad" stroke-width="1.2" /><path d="M845.2 116.3V123.8H852.7" fill="#eef0f1" stroke="#b4b8bd" stroke-width="1" /><circle cx="835.60" cy="128.40" r="8.70" fill="url(#gRmd)" /><text x="835.60" y="130.70" font-family="Liberation Sans" font-size="6.6" font-weight="700" fill="#fff" text-anchor="middle" letter-spacing="-0.4">Rmd</text><path d="M199.8 125.8L210.2 136.2M210.2 125.8L199.8 136.2" fill="none" stroke="#bcbec0" stroke-width="2.7" /><path d="M376.0 125.8L386.4 136.2M386.4 125.8L376.0 136.2" fill="none" stroke="#bcbec0" stroke-width="2.7" /><path d="M783.0 125.8L793.4000000000001 136.2M793.4000000000001 125.8L783.0 136.2" fill="none" stroke="#bcbec0" stroke-width="2.7" /><path d="M1147.3 125.8L1157.7 136.2M1157.7 125.8L1147.3 136.2" fill="none" stroke="#bcbec0" stroke-width="2.7" /><path d="M221.8 647.0L232.2 657.4000000000001M232.2 647.0L221.8 657.4000000000001" fill="none" stroke="#bcbec0" stroke-width="2.7" /><path d="M391.8 647.0L402.2 657.4000000000001M402.2 647.0L391.8 657.4000000000001" fill="none" stroke="#bcbec0" stroke-width="2.7" /><path d="M487.0 647.0L497.4 657.4000000000001M497.4 647.0L487.0 657.4000000000001" fill="none" stroke="#bcbec0" stroke-width="2.7" /><path d="M31.8 172.4L44.4 162.4V167.6H56.4V177.2H44.4V182.4Z" fill="#e4e4e4" stroke="#c3c4c5" stroke-width="1.2" /><path d="M85.8 172.4L73.2 162.4V167.6H61.2V177.2H73.2V182.4Z" fill="#eef0f0" stroke="#dfe2e3" stroke-width="1.2" /><rect x="123.60" y="162.60" width="18.00" height="18.00" fill="#fbfcfe" stroke="#a2b4c8" stroke-width="1" rx="2.5" /><path d="M123.6 167.6V165.1a2.5 2.5 0 0 1 2.5 -2.5h13a2.5 2.5 0 0 1 2.5 2.5V167.6Z" fill="#cfe3f7" stroke="#a2b4c8" stroke-width="1" /><path d="M116.6 178.6L122.4 172.8L119.4 169.8H127.6V178L124.6 175L118.8 180.8Z" fill="#d5d8dc" stroke="#9aa0a8" stroke-width="1" /><rect x="173.30" y="161.30" width="22.60" height="22.50" fill="#cddff0" stroke="#c3d6ea" stroke-width="1" rx="2" opacity="1"/><rect x="176.92" y="162.30" width="15.82" height="9.45" fill="#fff" rx="0.5" opacity="1"/><rect x="179.18" y="174.80" width="11.30" height="9.00" fill="#fff" opacity="1"/><rect x="180.98" y="176.60" width="3.16" height="7.20" fill="#cddff0" opacity="1"/><text x="225.20" y="167.60" font-family="Liberation Serif" font-size="12.6" font-weight="700" fill="#b4b4b4" text-anchor="start" textLength="30" lengthAdjust="spacingAndGlyphs">ABC</text><path d="M234.2 177.4L238.6 182.6L247.8 171.2" fill="none" stroke="#14a014" stroke-width="2.8" stroke-linejoin="miter"/><path d="M284.6 173.4L294 182.4" fill="none" stroke="#a0622d" stroke-width="3.6" stroke-linecap="round"/><circle cx="278.70" cy="167.40" r="7.80" fill="url(#gLens)" stroke="#9db5d0" stroke-width="1.6" /><path d="M329.2 158.2H344.7L351.2 164.7V182.79999999999998H329.2Z" fill="#fff" /><path d="M329.2 182.79999999999998V158.2H344.7L351.2 164.7" fill="none" stroke="#c9cdd1" stroke-width="1.1" /><path d="M351.2 164.7V182.79999999999998H329.2" fill="none" stroke="#a2a7ad" stroke-width="1.2" /><path d="M344.7 158.2V164.7H351.2" fill="#eef0f1" stroke="#b4b8bd" stroke-width="1" /><circle cx="340.20" cy="172.80" r="8.70" fill="#2a8fd0" stroke="#1f75b4" stroke-width="0.8" /><path d="M336.6 166.4q3 -1.6 5.4 -0.6l-1 3.2l-3 1.4l1.4 2.6l3.6 1l-1 4.4l-2.4 1.4l-1.2 -4l-2.6 -2.6Z" fill="#e6c64a" /><path d="M320.2 163.4H328.4V159.8L337 166.8L328.4 173.6V170H320.2Z" fill="#dba93a" stroke="#b4842a" stroke-width="1" /><path d="M453 169.6H462L457.5 175Z" fill="#000" /><path d="M505.46 169.19L505.46 172.81L501.94 173.04L501.06 175.17L503.38 177.82L500.82 180.38L498.17 178.06L496.04 178.94L495.81 182.46L492.19 182.46L491.96 178.94L489.83 178.06L487.18 180.38L484.62 177.82L486.94 175.17L486.06 173.04L482.54 172.81L482.54 169.19L486.06 168.96L486.94 166.83L484.62 164.18L487.18 161.62L489.83 163.94L491.96 163.06L492.19 159.54L495.81 159.54L496.04 163.06L498.17 163.94L500.82 161.62L503.38 164.18L501.06 166.83L501.94 168.96ZM496.8 171A2.8 2.8 0 1 0 491.2 171A2.8 2.8 0 1 0 496.8 171Z" fill="#fff" stroke="#c2c3c4" stroke-width="1.3" fill-rule="evenodd" stroke-linejoin="round"/><path d="M520 170.5H529L524.5 175Z" fill="#000" /><rect x="1042.00" y="161.00" width="20.30" height="21.40" fill="#66b866" stroke="#58a858" stroke-width="1" rx="3.5" /><text x="1052.20" y="178.00" font-family="Liberation Serif" font-size="16" font-weight="400" fill="#fff" text-anchor="middle" >C</text><circle cx="1038.20" cy="165.00" r="6.60" fill="#fff" stroke="#d4d6d8" stroke-width="1" /><path d="M1033.4 165H1043M1038.2 160.2V169.8" fill="none" stroke="#1eaa1e" stroke-width="2.6" /><path d="M1125.4 170.4H1134L1129.7 175Z" fill="#000" /><rect x="1151.00" y="161.00" width="18.40" height="19.00" fill="#fff" stroke="#d2d6d9" stroke-width="1" rx="2" /><rect x="1153.20" y="168.00" width="11.80" height="4.80" fill="#b3c9f0" /><path d="M1166.7 167.9H1173.6V163L1182.4 170.5L1173.6 177.8V173.3H1166.7Z" fill="#1fa84f" /><rect x="1250.20" y="161.00" width="18.20" height="19.00" fill="#fff" stroke="#d2d6d9" stroke-width="1" rx="2" /><path d="M1257 176.4C1261.6 174 1261.6 168.4 1256.4 167.6V170.6L1251.8 166.4L1256.4 162.2V165.2C1264.8 165.8 1265 174.6 1257 176.4Z" fill="#1f5fd0" /><path d="M1265 167.9H1272.8V163L1281.6 170.5L1272.8 177.8V173.3H1265Z" fill="#1fa84f" /><circle cx="1319.00" cy="171.60" r="3.90" fill="#1e90e0" /><path d="M1311.4 167.2A9 9 0 0 1 1327.6 169.2M1326.6 176A9 9 0 0 1 1310.4 174" fill="none" stroke="#1e90e0" stroke-width="3" /><path d="M1305 169.4H1311.6M1326.4 173.8H1333.6" fill="none" stroke="#1e90e0" stroke-width="3" /><path d="M1344 170.4H1353L1348.5 175Z" fill="#000" /><path d="M1295 144V137a3 3 0 0 1 3 -3h19a3 3 0 0 1 3 3V144Z" fill="#868e96" /><rect x="1296.80" y="138.80" width="21.40" height="3.80" fill="#e9eaec" /><path d="M1327 144V126.8a3 3 0 0 1 3 -3h18a3 3 0 0 1 3 3V144Z" fill="#868e96" /><rect x="1328.80" y="129.00" width="20.40" height="13.40" fill="#e9eaec" /><path d="M1295 664V657a3 3 0 0 1 3 -3h19a3 3 0 0 1 3 3V664Z" fill="#868e96" /><rect x="1296.80" y="658.80" width="21.40" height="3.80" fill="#e9eaec" /><path d="M1327 664V646.8a3 3 0 0 1 3 -3h18a3 3 0 0 1 3 3V664Z" fill="#868e96" /><rect x="1328.80" y="649.00" width="20.40" height="13.40" fill="#e9eaec" /><path d="M1833 144V137a3 3 0 0 1 3 -3h19a3 3 0 0 1 3 3V144Z" fill="#868e96" /><rect x="1834.80" y="138.80" width="21.40" height="3.80" fill="#e9eaec" /><path d="M1864.6 144V126.8a3 3 0 0 1 3 -3h18a3 3 0 0 1 3 3V144Z" fill="#868e96" /><rect x="1866.40" y="129.00" width="20.40" height="13.40" fill="#e9eaec" /><path d="M1833 468.2V461.2a3 3 0 0 1 3 -3h19a3 3 0 0 1 3 3V468.2Z" fill="#868e96" /><rect x="1834.80" y="463.00" width="21.40" height="3.80" fill="#e9eaec" /><path d="M1864.6 468.2V451a3 3 0 0 1 3 -3h18a3 3 0 0 1 3 3V468.2Z" fill="#868e96" /><rect x="1866.40" y="453.20" width="20.40" height="13.40" fill="#e9eaec" /><path d="M1398 181.6L1410.6 169.6" fill="none" stroke="#9b6030" stroke-width="4.6" stroke-linecap="round"/><path d="M1398.6 180L1409.8 169.4" fill="none" stroke="#c08850" stroke-width="1.2" stroke-linecap="round" opacity="0.7"/><path d="M1403.4 163.6L1408.2 159.2C1413.5 158.6 1419 162 1422.6 169L1419.6 171.6C1417.6 168.6 1415.6 167 1413.4 166.4L1410 170.2L1405.6 165.8Z" fill="#cfd0d1" stroke="#8f9194" stroke-width="1" /><path d="M1605.54 169.14L1605.54 173.26L1601.60 173.54L1600.59 175.98L1603.18 178.96L1600.26 181.88L1597.28 179.29L1594.84 180.30L1594.56 184.24L1590.44 184.24L1590.16 180.30L1587.72 179.29L1584.74 181.88L1581.82 178.96L1584.41 175.98L1583.40 173.54L1579.46 173.26L1579.46 169.14L1583.40 168.86L1584.41 166.42L1581.82 163.44L1584.74 160.52L1587.72 163.11L1590.16 162.10L1590.44 158.16L1594.56 158.16L1594.84 162.10L1597.28 163.11L1600.26 160.52L1603.18 163.44L1600.59 166.42L1601.60 168.86ZM1595.9 171.2A3.4 3.4 0 1 0 1589.1 171.2A3.4 3.4 0 1 0 1595.9 171.2Z" fill="url(#gGear)" stroke="#2b8cc0" stroke-width="0.8" fill-rule="evenodd" stroke-linejoin="round"/><path d="M1668.3 170H1677L1672.65 175Z" fill="#000" /><path d="M1400 506.4V487.6H1410.5L1413.5 484.2H1421.5L1425.4 488V506.4Z" fill="#f3dd88" stroke="#d4aa2c" stroke-width="1" /><path d="M1401.6 505V489H1411.2L1414.2 485.8H1421L1424 488.6V505Z" fill="#e6e8e9" /><rect x="1398.60" y="491.60" width="23.40" height="14.80" fill="url(#gFold)" stroke="#d4a624" stroke-width="1.1" rx="1" /><circle cx="1401.80" cy="492.00" r="8.90" fill="#12a46d" stroke="#0e9562" stroke-width="1" /><path d="M1396.2 492H1407.3999999999999M1401.8 486.4V497.6" fill="none" stroke="#fff" stroke-width="3.6" /><rect x="1565.80" y="485.00" width="19.40" height="22.00" fill="#fff" stroke="#dfe3ea" stroke-width="1" rx="1" /><circle cx="1564.80" cy="492.00" r="8.80" fill="#b3201c" stroke="#8e1512" stroke-width="1" /><path d="M1560.8 488L1568.8 496M1568.8 488L1560.8 496" fill="none" stroke="#fff" stroke-width="3.2" /><rect x="1667.80" y="485.60" width="16.80" height="18.20" fill="#fff" stroke="#c9cdd2" stroke-width="1" rx="1" /><rect x="1678.60" y="488.60" width="17.00" height="18.40" fill="#fff" stroke="#c9cdd2" stroke-width="1" rx="1" /><path d="M1674.4 495.6H1682.4V492.2L1689.4 498L1682.4 503.8V500.4H1674.4Z" fill="#1aa0e8" /><path d="M1828.74 492.90L1828.74 497.10L1824.80 497.39L1823.76 499.89L1826.34 502.88L1823.38 505.84L1820.39 503.26L1817.89 504.30L1817.60 508.24L1813.40 508.24L1813.11 504.30L1810.61 503.26L1807.62 505.84L1804.66 502.88L1807.24 499.89L1806.20 497.39L1802.26 497.10L1802.26 492.90L1806.20 492.61L1807.24 490.11L1804.66 487.12L1807.62 484.16L1810.61 486.74L1813.11 485.70L1813.40 481.76L1817.60 481.76L1817.89 485.70L1820.39 486.74L1823.38 484.16L1826.34 487.12L1823.76 490.11L1824.80 492.61ZM1819.0 495A3.5 3.5 0 1 0 1812.0 495A3.5 3.5 0 1 0 1819.0 495Z" fill="url(#gGear)" stroke="#2b8cc0" stroke-width="0.8" fill-rule="evenodd" stroke-linejoin="round"/><path d="M1891 494.3H1899.8L1895.4 499Z" fill="#000" /><path d="M1424.4 524.4L1432.4 531.8L1424.4 539.4" fill="none" stroke="#c6c9cd" stroke-width="2" /><path d="M1513.4 524.4L1521.4 531.8L1513.4 539.4" fill="none" stroke="#c6c9cd" stroke-width="2" /><path d="M1715.2 524.4L1723.2 531.8L1715.2 539.4" fill="none" stroke="#c6c9cd" stroke-width="2" /><path d="M1844.9 518L1857.4 523.588V537.812L1844.9 543.4L1832.4 537.812V523.588Z" fill="url(#gCube)" stroke="#62bfdc" stroke-width="1" /><path d="M1832.4 523.588L1844.9 529.176L1857.4 523.588M1844.9 529.176V543.4" fill="none" stroke="#6cc6de" stroke-width="0.9" opacity="0.8"/><path d="M1832.4 537.812L1844.9 532.2239999999999L1857.4 537.812M1844.9 518V532.2239999999999" fill="none" stroke="#7fcfe6" stroke-width="0.7" opacity="0.6"/><text x="1845.30" y="535.53" font-family="Liberation Serif" font-size="18.287999999999997" font-weight="400" fill="#3768b2" text-anchor="middle" stroke="#3768b2" stroke-width="0.35" textLength="10.5" lengthAdjust="spacingAndGlyphs">R</text><path d="M1490 570.4L1498.5 559L1507 570.4Z" fill="#8a919e" /><path d="M1347 603L1351.5 598L1356 603ZM1347 606L1351.5 611L1356 606Z" fill="#6b7280" /><path d="M1893 201.6L1896.8 197.4L1900.6 201.6Z" fill="#a3a3a3" /><path d="M1893 409L1896.8 413.2L1900.6 409Z" fill="#505050" /><path d="M1502.5 346.2L1511.4 356.6L1502.5 367L1493.6 356.6Z" fill="#c5060b" /><text x="1502.50" y="361.40" font-family="Liberation Sans" font-size="13" font-weight="700" fill="#fff" text-anchor="middle" >?</text><path d="M1456.3 588.3L1464.9 597.6H1460.1V605.2H1470.4V610.3H1453.4V597.6H1448.2Z" fill="#3fd486" stroke="#22b563" stroke-width="1.2" stroke-linejoin="round"/><path d="M1449.4 626.5H1464.4L1471.9 634.0V652.1H1449.4Z" fill="#fff" /><path d="M1449.4 652.1V626.5H1464.4L1471.9 634.0" fill="none" stroke="#c9cdd1" stroke-width="1.1" /><path d="M1471.9 634.0V652.1H1449.4" fill="none" stroke="#a2a7ad" stroke-width="1.2" /><path d="M1464.4 626.5V634.0H1471.9" fill="#eef0f1" stroke="#b4b8bd" stroke-width="1" /><circle cx="1454.80" cy="638.60" r="8.70" fill="url(#gRmd)" /><text x="1454.80" y="640.90" font-family="Liberation Sans" font-size="6.6" font-weight="700" fill="#fff" text-anchor="middle" letter-spacing="-0.4">Rmd</text><path d="M1447.6 676.3000000000001V672.7H1457.5L1461 668.3000000000001H1469L1472.8 671.9000000000001V690.3000000000001H1447.6Z" fill="#f3dd88" stroke="#d4aa2c" stroke-width="1" /><path d="M1449 676.3000000000001V673.9000000000001H1458.4L1461.6 669.9000000000001H1468.6L1471.4 672.7V689.3000000000001H1449Z" fill="#e6e8e9" /><rect x="1446.00" y="675.50" width="24.40" height="15.40" fill="url(#gFold)" stroke="#d4a624" stroke-width="1.1" rx="1" /><path d="M1451.2 706.3000000000001H1466.2L1473.7 713.8000000000001V731.9000000000001H1451.2Z" fill="#fff" /><path d="M1451.2 731.9000000000001V706.3000000000001H1466.2L1473.7 713.8000000000001" fill="none" stroke="#c9cdd1" stroke-width="1.1" /><path d="M1473.7 713.8000000000001V731.9000000000001H1451.2" fill="none" stroke="#a2a7ad" stroke-width="1.2" /><path d="M1466.2 706.3000000000001V713.8000000000001H1473.7" fill="#eef0f1" stroke="#b4b8bd" stroke-width="1" /><rect x="1446.00" y="716.00" width="23.70" height="12.70" fill="#18c24c" rx="2" /><text x="1457.80" y="726.30" font-family="Liberation Sans" font-size="10" font-weight="700" fill="#fff" text-anchor="middle" letter-spacing="-0.6" textLength="20" lengthAdjust="spacingAndGlyphs">YML</text><path d="M1451.2 746.3000000000001H1466.2L1473.7 753.8000000000001V771.9000000000001H1451.2Z" fill="#fff" /><path d="M1451.2 771.9000000000001V746.3000000000001H1466.2L1473.7 753.8000000000001" fill="none" stroke="#c9cdd1" stroke-width="1.1" /><path d="M1473.7 753.8000000000001V771.9000000000001H1451.2" fill="none" stroke="#a2a7ad" stroke-width="1.2" /><path d="M1466.2 746.3000000000001V753.8000000000001H1473.7" fill="#eef0f1" stroke="#b4b8bd" stroke-width="1" /><rect x="1446.00" y="756.00" width="23.70" height="12.70" fill="#18c24c" rx="2" /><text x="1457.80" y="766.30" font-family="Liberation Sans" font-size="10" font-weight="700" fill="#fff" text-anchor="middle" letter-spacing="-0.6" textLength="20" lengthAdjust="spacingAndGlyphs">YML</text><path d="M1449.4 786.5H1464.4L1471.9 794.0V812.1H1449.4Z" fill="#fff" /><path d="M1449.4 812.1V786.5H1464.4L1471.9 794.0" fill="none" stroke="#c9cdd1" stroke-width="1.1" /><path d="M1471.9 794.0V812.1H1449.4" fill="none" stroke="#a2a7ad" stroke-width="1.2" /><path d="M1464.4 786.5V794.0H1471.9" fill="#eef0f1" stroke="#b4b8bd" stroke-width="1" /><circle cx="1454.80" cy="798.60" r="8.70" fill="url(#gRmd)" /><text x="1454.80" y="800.90" font-family="Liberation Sans" font-size="6.6" font-weight="700" fill="#fff" text-anchor="middle" letter-spacing="-0.4">Rmd</text><path d="M1449.2 826.4H1463.5L1471.0 833.9V851.6H1449.2Z" fill="#fff" /><path d="M1449.2 851.6V826.4H1463.5L1471.0 833.9" fill="none" stroke="#c9cdd1" stroke-width="1.1" /><path d="M1471.0 833.9V851.6H1449.2" fill="none" stroke="#a2a7ad" stroke-width="1.2" /><path d="M1463.5 826.4V833.9H1471.0" fill="#eef0f1" stroke="#b4b8bd" stroke-width="1" /><text x="1445.80" y="846.90" font-family="Liberation Sans" font-size="11" font-weight="700" fill="#4b4aa6" text-anchor="start" >T</text><text x="1450.80" y="849.40" font-family="Liberation Sans" font-size="9.5" font-weight="700" fill="#4b4aa6" text-anchor="start" >E</text><text x="1455.20" y="846.90" font-family="Liberation Sans" font-size="11" font-weight="700" fill="#4b4aa6" text-anchor="start" >X</text><path d="M1449.7 866.4H1464.5L1472.0 873.9V891.6H1449.7Z" fill="#fff" /><path d="M1449.7 891.6V866.4H1464.5L1472.0 873.9" fill="none" stroke="#c9cdd1" stroke-width="1.1" /><path d="M1472.0 873.9V891.6H1449.7" fill="none" stroke="#a2a7ad" stroke-width="1.2" /><path d="M1464.5 866.4V873.9H1472.0" fill="#eef0f1" stroke="#b4b8bd" stroke-width="1" /><circle cx="1455.60" cy="878.30" r="8.70" fill="#16b024" /><text x="1455.60" y="880.70" font-family="Liberation Sans" font-size="6.4" font-weight="700" fill="#16b024" text-anchor="middle" stroke="#fff" stroke-width="0.8" letter-spacing="-0.2">CSS</text><path d="M1449.4 906.5H1464.4L1471.9 914.0V932.1H1449.4Z" fill="#fff" /><path d="M1449.4 932.1V906.5H1464.4L1471.9 914.0" fill="none" stroke="#c9cdd1" stroke-width="1.1" /><path d="M1471.9 914.0V932.1H1449.4" fill="none" stroke="#a2a7ad" stroke-width="1.2" /><path d="M1464.4 906.5V914.0H1471.9" fill="#eef0f1" stroke="#b4b8bd" stroke-width="1" /><circle cx="1454.80" cy="918.60" r="8.70" fill="url(#gRmd)" /><text x="1454.80" y="920.90" font-family="Liberation Sans" font-size="6.6" font-weight="700" fill="#fff" text-anchor="middle" letter-spacing="-0.4">Rmd</text><path d="M1447.6 956.3000000000001V952.7H1457.5L1461 948.3000000000001H1469L1472.8 951.9000000000001V970.3000000000001H1447.6Z" fill="#f3dd88" stroke="#d4aa2c" stroke-width="1" /><path d="M1449 956.3000000000001V953.9000000000001H1458.4L1461.6 949.9000000000001H1468.6L1471.4 952.7V969.3000000000001H1449Z" fill="#e6e8e9" /><rect x="1446.00" y="955.50" width="24.40" height="15.40" fill="url(#gFold)" stroke="#d4a624" stroke-width="1.1" rx="1" /><path d="M326.4 698.4C327.4 690.4 333 686.4 339.6 686.2V682L347.8 689.2L339.6 696.2V692.4C334 692 329.6 694 326.4 698.4Z" fill="#e8ecf3" stroke="#ccd0d8" stroke-width="1" /><path d="M1357.4 678.2L1345 692.2" fill="none" stroke="#d0d3d7" stroke-width="2.2" stroke-linecap="round"/><path d="M1343 690.6L1347.4 694.6L1344.6 702.4L1339 701.8L1337.6 703L1333.4 701L1331.6 702L1326 700C1333 698 1338.6 695.4 1343 690.6Z" fill="#eceef1" stroke="#ccd0d5" stroke-width="1" /><path d="M19.8 1048.4L29 1047.1V1054.4H19.8ZM30.2 1046.9L40.3 1045.4V1054.4H30.2ZM19.8 1055.6H29V1062.9L19.8 1061.6ZM30.2 1055.6H40.3V1064.6L30.2 1063.1Z" fill="#fff" /><circle cx="88.00" cy="1051.90" r="6.40" fill="none" stroke="#e6e6e6" stroke-width="1.5" /><path d="M83.4 1056.4L75 1064.4" fill="none" stroke="#e6e6e6" stroke-width="1.6" /><path d="M510.3 1045V1047.2H522V1045M510.3 1063.8V1061.6H522V1063.8M528.6 1045V1063.8" fill="none" stroke="#fff" stroke-width="1.3" /><rect x="510.30" y="1051.00" width="11.70" height="7.60" fill="none" stroke="#fff" stroke-width="1.3" /><rect x="527.20" y="1051.40" width="2.80" height="2.80" fill="#fff" /><path d="M572 1048.4L594.6 1045.6L596 1062L574.4 1064.6Z" fill="#c4c8cc" stroke="#9aa0a6" stroke-width="1" /><path d="M575 1050.6L592.6 1048.4L593.6 1060.2L576.6 1062.2Z" fill="#d6e8f8" /><path d="M577 1058L580.4 1057.4L582.4 1051.6L584.6 1058.4L587 1055.4L589 1057.6L592.6 1056" fill="none" stroke="#3a8ad8" stroke-width="1.1" /><path d="M570 1050.4L572.4 1049.6V1063.6L570 1062.4Z" fill="#9aa0a6" /><path d="M581 1064.4L590 1063.4L591.6 1067.2Q585 1069.6 578.6 1067.4Z" fill="#b4b8bc" /><rect x="638.00" y="1041.30" width="22.00" height="6.70" fill="#41a5ee" /><rect x="638.00" y="1048.00" width="22.00" height="6.70" fill="#2b7cd3" /><rect x="638.00" y="1054.70" width="22.00" height="6.70" fill="#185abd" /><rect x="638.00" y="1061.40" width="22.00" height="6.60" fill="#103f91" /><rect x="630.80" y="1047.00" width="15.50" height="15.50" fill="#185abd" rx="1.5" /><text x="638.50" y="1059.40" font-family="Liberation Sans" font-size="11.5" font-weight="700" fill="#fff" text-anchor="middle" >W</text><rect x="693.60" y="1043.20" width="27.60" height="22.00" fill="#000" stroke="#a6a6a6" stroke-width="1.2" rx="1" /><rect x="694.40" y="1044.00" width="26.00" height="3.00" fill="#8f8f8f" /><path d="M697 1050.6H699.6M701 1049.4L702.4 1051.8M703.4 1051.8H709" fill="none" stroke="#d0d0d0" stroke-width="0.9" /><path d="M694.6 1053.5C702 1052.8 712 1050 720.4 1047.4V1047.2H694.6Z" fill="#3a3a3a" opacity="0.8"/><circle cx="770.00" cy="1055.60" r="13.20" fill="url(#gFx)" /><path d="M757.2 1051C757 1046.6 759 1043.6 760.4 1042.6C760.4 1045 761.6 1046.4 763.4 1047C765 1044 768.4 1041.4 771.6 1039.4C771 1042.6 773.4 1044.6 776 1045.4C780.6 1047 784 1051 783.4 1057.4C782.8 1050.6 778 1049.6 775.4 1050.4C770 1046 762 1047 757.2 1051Z" fill="#ffbd2e" /><circle cx="769.40" cy="1055.40" r="6.80" fill="#7542e5" /><path d="M762.8 1054.6C765 1051 771 1050.4 774.6 1052.6C771.4 1053 769.6 1054.4 770.2 1056.6C766.6 1058.4 763.6 1057 762.8 1054.6Z" fill="#ff7a1a" /><path d="M818 1045.4V1043.6Q818 1042.8 819 1042.8H828.6L830.6 1045.4Z" fill="#e8a800" /><rect x="818.00" y="1045.20" width="27.60" height="21.00" fill="#ffd55c" rx="1" /><path d="M823.4 1066.2V1056.2Q823.4 1054.8 824.8 1054.8H839.2Q840.6 1054.8 840.6 1056.2V1066.2H836.4V1059H827.6V1066.2Z" fill="#3a9be6" /><rect x="880.00" y="1041.00" width="27.40" height="26.00" fill="url(#gPdf)" /><path d="M886.4 1060.8C890.5 1058.6 893 1053.6 893.6 1048.4C893.8 1046.4 892 1046.2 892 1048.2C892 1052.4 896.6 1057.8 901.4 1058.4C903.4 1058.6 903.4 1056.8 901 1056.8C896 1056.8 890 1058.6 886.4 1060.8Z" fill="none" stroke="#fff" stroke-width="1.3" /><circle cx="955.40" cy="1054.80" r="14.20" fill="#fff" /><path d="M968 1059L971 1064.4L965.4 1064.6Z" fill="#fff" stroke="#111" stroke-width="1.2" /><circle cx="955.40" cy="1054.80" r="12.60" fill="#111" /><path d="M959.6 1044.6C963.6 1042.4 968 1044 967 1048.4C964.6 1050.6 960.2 1050.4 957.6 1048.6Z" fill="#a9c7e8" stroke="#fff" stroke-width="1" /><path d="M957 1052L954.8 1064.6M961 1051.6L959.6 1065M964.6 1052.4L964 1062.8" fill="none" stroke="#f2c21c" stroke-width="2.2" /><circle cx="949.40" cy="1055.40" r="4.40" fill="#fff" /><circle cx="950.20" cy="1055.80" r="2.10" fill="#111" /><path d="M1004.4 1043H1024.8L1030.4 1048.6L1028.6 1067.2H1004.4Z" fill="url(#gNpp)" stroke="#8e9a8a" stroke-width="0.8" /><path d="M1005.4 1043.2H1024.2V1046.4H1005.4Z" fill="#f4f4f4" /><path d="M1008 1054.6C1012 1050.6 1018 1050.6 1021.6 1053.6M1007.6 1057.6H1023M1010 1060.6C1013 1063.6 1018 1062.6 1019.6 1059.6" fill="none" stroke="#1d5a16" stroke-width="1.2" /><circle cx="1019.40" cy="1050.20" r="2.20" fill="#e9f2d8" stroke="#2a5a20" stroke-width="0.7" /><path d="M1031.4 1042.6L1033.6 1043.8L1024.6 1061.6L1022 1063.2L1022.4 1060.4Z" fill="#e9a41e" stroke="#9a5a10" stroke-width="0.6" /><circle cx="1079.60" cy="1054.70" r="15.20" fill="#75aadb" /><text x="1079.80" y="1061.20" font-family="Liberation Serif" font-size="19.5" font-weight="400" fill="#fff" text-anchor="middle" >R</text><path d="M1127.4 1058.6C1126.4 1049.4 1136.6 1043.6 1146.2 1045.4C1153.6 1046.8 1154.6 1054.6 1150 1060.6C1146.6 1065.2 1141.6 1068 1137.2 1066.4C1134.4 1065.4 1136.4 1061.8 1133.4 1061.2C1130.6 1060.6 1127.8 1061.6 1127.4 1058.6Z" fill="#b9d3e4" stroke="#8fb0c8" stroke-width="1" /><circle cx="1131.60" cy="1056.00" r="2.40" fill="#d2382c" /><circle cx="1134.80" cy="1050.40" r="2.40" fill="#4aa83a" /><circle cx="1141.60" cy="1047.80" r="2.40" fill="#e6b41e" /><circle cx="1148.00" cy="1049.60" r="2.20" fill="#e07818" /><circle cx="1139.40" cy="1060.60" r="2.00" fill="#f5f8fb" /><path d="M1156.4 1040.6L1158.6 1042.6L1142 1066.6L1139.6 1068.2L1140.2 1065.4Z" fill="#e0861c" stroke="#9a5a10" stroke-width="0.5" /><path d="M1153.4 1041.6L1156.8 1039.4L1159.6 1042L1157.6 1045.6Z" fill="#e6d2a4" /><path d="M1544 1059L1551.9 1050.6L1560 1059" fill="none" stroke="#fff" stroke-width="1.4" /><path d="M1572 1056.4C1571.6 1052.6 1575 1050.2 1578 1051.2C1579.4 1048 1584.6 1046.6 1587.6 1050.4C1590.6 1050 1592.6 1053 1592.2 1056C1592.4 1059 1590.4 1060.8 1588 1060.8H1576C1573.4 1060.8 1572 1058.8 1572 1056.4Z" fill="#1490df" /><path d="M1578 1051.2C1579.4 1048 1584.6 1046.6 1587.6 1050.4L1582 1054.4Z" fill="#0364b8" /><path d="M1572.4 1058.4L1582 1054.4L1591.6 1059.4Q1590.4 1060.8 1588 1060.8H1576Q1573.4 1060.8 1572.4 1058.4Z" fill="#28a8ea" /><rect x="1606.40" y="1050.40" width="14.60" height="10.00" fill="none" stroke="#fff" stroke-width="1.3" /><rect x="1608.20" y="1052.20" width="11.00" height="6.40" fill="#fff" /><rect x="1621.20" y="1053.40" width="1.40" height="4.00" fill="#fff" /><path d="M1603.2 1048V1051M1606 1048V1051M1602.2 1051H1607V1053.4Q1607 1055 1604.6 1055Q1602.2 1055 1602.2 1053.4ZM1604.6 1055V1060.4H1606.4" fill="none" stroke="#fff" stroke-width="1.1" /><path d="M1635.3000000000002 1062.4A13.6 13.6 0 0 1 1648.9 1048.8000000000002" fill="none" stroke="#fff" stroke-width="1.3" /><path d="M1639.3000000000002 1062.4A9.6 9.6 0 0 1 1648.9 1052.8000000000002" fill="none" stroke="#fff" stroke-width="1.3" /><path d="M1643.3000000000002 1062.4A5.6 5.6 0 0 1 1648.9 1056.8000000000002" fill="none" stroke="#fff" stroke-width="1.3" /><circle cx="1647.80" cy="1061.40" r="1.70" fill="#fff" /><path d="M1662.2 1052.4H1665.2L1669 1048.6V1062L1665.2 1058.2H1662.2Z" fill="none" stroke="#fff" stroke-width="1.2" /><path d="M1672.4 1052.6Q1674.4 1055.2 1672.4 1057.8" fill="none" stroke="#fff" stroke-width="1.2" /><path d="M1675.4 1050.2Q1679 1055.2 1675.4 1060.2" fill="none" stroke="#9a9a9a" stroke-width="1.1" /><path d="M1678.6 1047.6Q1684 1055.2 1678.6 1062.8" fill="none" stroke="#6a6a6a" stroke-width="1.1" /><path d="M1692.2 1057.4C1691.8 1054 1694.6 1052 1697.4 1052.4C1698.4 1048.4 1705.4 1046.8 1707.8 1051.6C1710.8 1051.4 1712.6 1054.2 1712.2 1057.2C1712.2 1060 1710.4 1061.8 1708 1061.8H1696.2C1693.8 1061.8 1692.2 1059.8 1692.2 1057.4Z" fill="#fff" /><path d="M1702 1051.8L1706 1056H1703.4V1059.6H1700.6V1056H1698Z" fill="#2a2224" /><path d="M1869.4 1045H1889.4V1059.4H1877L1873.2 1062.8V1059.4H1869.4Z" fill="#fff" /><path d="M1872.6 1049H1886.2M1872.6 1052.2H1886.2M1872.6 1055.4H1882" fill="none" stroke="#2a2224" stroke-width="1" /><circle cx="1888.60" cy="1065.00" r="9.60" fill="#2a2226" stroke="#9a9a9a" stroke-width="1.3" /><text x="1888.60" y="1070.00" font-family="Liberation Sans" font-size="13.5" font-weight="700" fill="#fff" text-anchor="middle" >2</text></svg>
</body></html>
